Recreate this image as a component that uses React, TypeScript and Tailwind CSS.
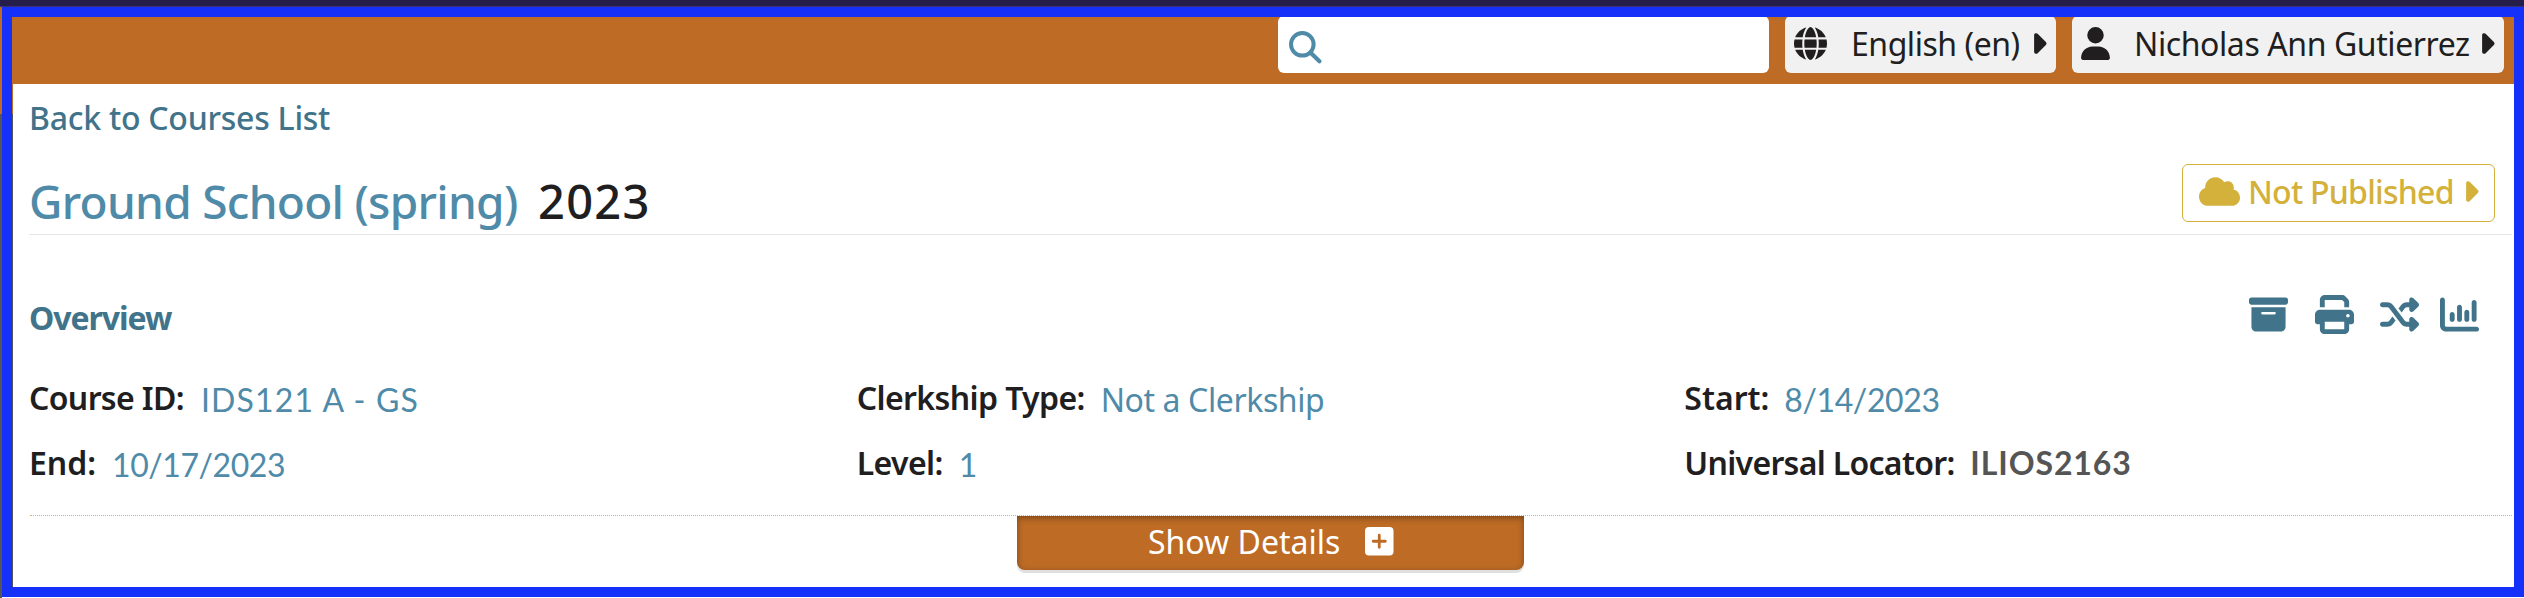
import type { ReactNode } from "react";
import { FaBoxArchive, FaCaretRight, FaChartColumn, FaCloud, FaGlobe, FaPrint, FaShuffle, FaUser } from "react-icons/fa6";

function SearchIcon() {
  return (
    <svg viewBox="0 0 33 33" className="ml-[11px] mt-[15px] h-[33px] w-[33px] text-[#4f8ba8]" fill="none" stroke="currentColor">
      <circle cx="13.3" cy="13.3" r="11.3" strokeWidth="4" />
      <path d="M21.4 21.4 30.4 30.2" strokeWidth="4.2" strokeLinecap="round" />
    </svg>
  );
}

function PlusBox() {
  return (
    <svg viewBox="0 0 28.5 28.5" className="mt-[11px] h-[28.5px] w-[28.5px]">
      <rect width="28.5" height="28.5" rx="4" fill="#fff" />
      <path d="M14.25 8.2v12.1M8.2 14.25h12.1" stroke="#bd6b25" strokeWidth="2.8" strokeLinecap="round" />
    </svg>
  );
}

function TopBar() {
  return (
    <header className="flex h-[67px] shrink-0 justify-end gap-4 bg-[#bd6b25] pr-[10px] text-[32px] leading-[55px] text-[#211e1f]">
      <div className="-mt-px h-[57px] w-[491px] rounded-md bg-white">
        <SearchIcon />
      </div>
      <button className="-mt-px flex h-[57px] w-[271px] items-start rounded-md bg-[#f1f1f1]">
        <FaGlobe className="ml-[9px] mt-[11px] h-[33px] w-[33px] shrink-0" />
        <span className="ml-[24px] w-[179px] shrink-0 whitespace-nowrap text-left tracking-[-0.46px]">English (en)</span>
        <FaCaretRight className="mt-[11px] h-[33px] w-[16.5px] shrink-0" />
      </button>
      <button className="-mt-px flex h-[57px] w-[432px] items-start rounded-md bg-[#f1f1f1]">
        <FaUser className="ml-[9px] mt-[11px] h-[33px] w-[29px] shrink-0" />
        <span className="ml-6 w-[344px] shrink-0 whitespace-nowrap text-left tracking-[-0.41px]">Nicholas Ann Gutierrez</span>
        <FaCaretRight className="mt-[11px] h-[33px] w-[16.5px] shrink-0" />
      </button>
    </header>
  );
}

function Field({ label, labelClass, children }: { label: string; labelClass: string; children: ReactNode }) {
  return (
    <div className="flex h-[65px] items-start whitespace-nowrap">
      <span className={"mt-px shrink-0 font-semibold text-[#211e1f] " + labelClass}>{label}</span>
      {children}
    </div>
  );
}

export default function App() {
  return (
    <div className="flex h-[598px] w-[2524px] flex-col overflow-hidden bg-white font-['Noto_Sans',sans-serif]">
      <div className="h-[7px] shrink-0 border-b border-[#3a3378] bg-[#261e4a]" />
      <div className="flex h-[591px]">
        <div className="flex w-[2px] shrink-0 flex-col bg-[#555]">
          <div className="h-[107px] bg-[#bd6b25]" />
        </div>
        <div className="flex h-[590px] w-[2522px] shrink-0 overflow-hidden border-10 border-[#1530f8]">
          <div className="w-px shrink-0 bg-[#555]">
            <div className="h-[97px] bg-[#bd6b25]" />
          </div>
          <div className="flex flex-1 flex-col">
            <TopBar />
            <main className="flex flex-col pl-4 pr-[2px] pt-[14px] text-[32px] leading-[40px]">
              <a className="whitespace-nowrap font-medium tracking-[-0.25px] text-[#41748a]">Back to Courses List</a>

              <div className="flex h-[97px] items-start border-b border-[#e6e8e8]">
                <h1 className="mt-[33px] flex whitespace-nowrap text-[46px] leading-[60px]">
                  <span className="w-[509px] font-medium tracking-[-0.72px] text-[#4f8ba8]">Ground School (spring)</span>
                  <span className="text-[47px] font-medium tracking-[1.3px] text-[#211e1f]">2023</span>
                </h1>
                <button className="ml-auto mr-[17px] mt-[26px] flex h-[58px] w-[313px] items-start rounded-md border border-[#d3b13b] leading-[54px] text-[#d3b13b]">
                  <FaCloud className="ml-4 mt-[10px] h-[33px] w-[41px] shrink-0" />
                  <span className="ml-[8px] w-[214px] shrink-0 whitespace-nowrap text-left font-medium tracking-[-0.75px]">Not Published</span>
                  <FaCaretRight className="mt-[10px] h-[33px] w-[16.5px] shrink-0" />
                </button>
              </div>

              <div className="mt-[60px] flex h-[82px] items-start text-[#41748a]">
                <h2 className="mt-[3px] font-bold tracking-[-1.04px]">Overview</h2>
                <div className="ml-auto mr-[33px] flex text-[39px]">
                  <FaBoxArchive />
                  <FaPrint className="ml-[27px]" />
                  <FaShuffle className="ml-[26px]" />
                  <FaChartColumn className="ml-[21px]" />
                </div>
              </div>

              <div className="grid h-[138px] grid-cols-3 content-start">
                <Field label="Course ID:" labelClass="w-[172px] tracking-[-0.65px]">
                  <span className="mt-[3px] font-['Lato'] tracking-[1.15px] text-[#4f8ba8]">IDS121 A - GS</span>
                </Field>
                <Field label="Clerkship Type:" labelClass="w-[244px] tracking-[-0.6px]">
                  <span className="mt-[3px] tracking-[-0.4px] text-[#4f8ba8]">Not a Clerkship</span>
                </Field>
                <Field label="Start:" labelClass="w-[100px]">
                  <span className="mt-[3px] font-['Lato'] tracking-[-0.4px] text-[#4f8ba8]">8/14/2023</span>
                </Field>
                <Field label="End:" labelClass="w-[83px]">
                  <span className="mt-[3px] font-['Lato'] tracking-[-0.43px] text-[#4f8ba8]">10/17/2023</span>
                </Field>
                <Field label="Level:" labelClass="w-[102px] tracking-[-0.6px]">
                  <span className="mt-[3px] font-['Lato'] text-[#4f8ba8]">1</span>
                </Field>
                <Field label="Universal Locator:" labelClass="w-[286px] tracking-[-0.7px]">
                  <span className="mt-px font-['Lato'] font-bold tracking-[0.91px] text-[#555]">ILIOS2163</span>
                </Field>
              </div>

              <div className="ml-px border-t border-dotted border-[#d6ad7c]">
                <button className="ml-[987px] flex h-[54px] w-[507px] items-start rounded-b-lg bg-[#bd6b25] leading-[52px] text-white shadow-[inset_0_2px_6px_rgba(0,0,0,0.35),0_3px_0_#e0e0e0]">
                  <span className="ml-[131px] w-[217px] shrink-0 text-left">Show Details</span>
                  <PlusBox />
                </button>
              </div>
            </main>
          </div>
        </div>
      </div>
    </div>
  );
}
